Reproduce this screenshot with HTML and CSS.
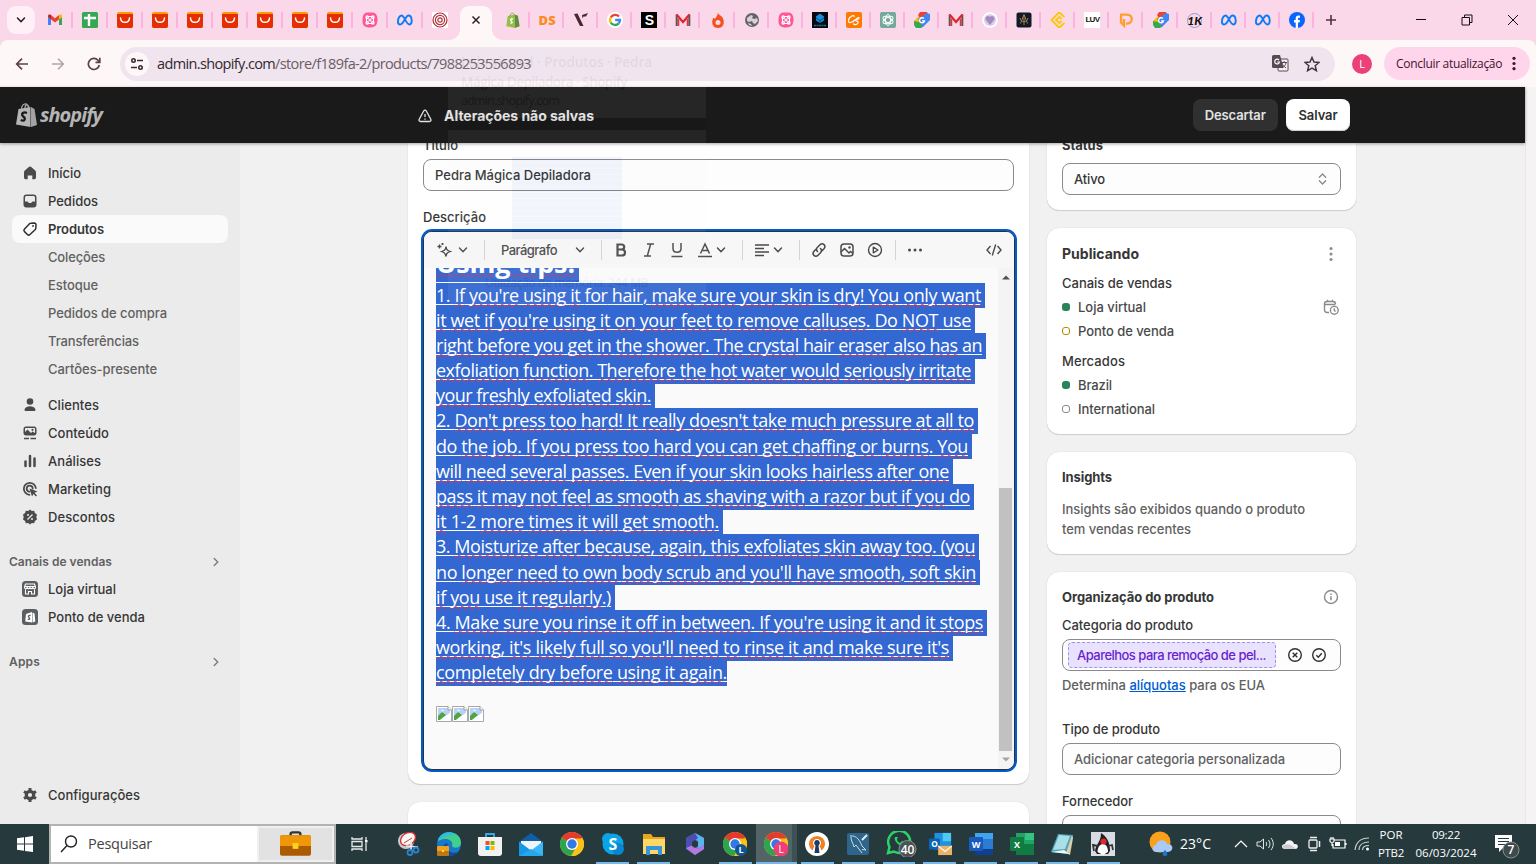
FILE: index.html
```html
<!DOCTYPE html>
<html lang="pt-BR">
<head>
<meta charset="utf-8">
<title>Pedra Mágica Depiladora · Shopify</title>
<link rel="stylesheet" href="styles.css">
</head>
<body>
<svg class="sprite" xmlns="http://www.w3.org/2000/svg">
  <symbol id="ali" viewBox="0 0 16 16"><rect width="16" height="16" rx="2" fill="#ff9a00"/><path d="M0 2h16v12a2 2 0 0 1-2 2H2a2 2 0 0 1-2-2z" fill="#e62e04"/><path d="M3.500 6c.3 5.800 8.700 5.800 9 0" fill="none" stroke="#fff" stroke-width="1.500" stroke-linecap="round"/></symbol>
  <symbol id="gmail" viewBox="0 0 16 16"><path d="M1 4v9h3V7z" fill="#4285f4"/><path d="M15 4v9h-3V7z" fill="#34a853"/><path d="M1 4.500V4c0-1.500 1.500-2 2.600-1.200L4 3v4.500z" fill="#c5221f"/><path d="M12 3l.4-.3C13.500 1.900 15 2.600 15 4v1.200l-3 2.300z" fill="#fbbc04"/><path d="M4 3l4 3.200L12 3v4.500l-4 3-4-3z" fill="#ea4335"/></symbol>
  <symbol id="gmail2" viewBox="0 0 16 16"><path d="M1.700 14V2.500M14.300 14V2.500" stroke="#5d5355" stroke-width="2"/><path d="M3.500 14V7M12.500 14V7" stroke="#e0353d" stroke-width="1.500"/><path d="M1.500 2.500L8 10l6.500-7.500" fill="none" stroke="#e0262e" stroke-width="2.200"/></symbol>
  <symbol id="sheet" viewBox="0 0 16 16"><rect width="16" height="16" rx="1.500" fill="#34a853"/><path d="M7 2v12M2 6h12" stroke="#fff" stroke-width="2.400"/></symbol>
  <symbol id="pinkatom" viewBox="0 0 16 16"><path d="M5 .5h6c3 .5 4.500 3 4.500 7 0 5-2 8-7.500 8S0 13 .5 8C.8 3 2 1 5 .5z" fill="#ff5595"/><g fill="none" stroke="#fff" stroke-width="1.100"><rect x="4.500" y="4.500" width="7" height="7" rx="2"/><circle cx="5.200" cy="5.200" r="1.300"/><circle cx="10.800" cy="5.200" r="1.300"/><circle cx="5.200" cy="10.800" r="1.300"/><circle cx="10.800" cy="10.800" r="1.300"/><circle cx="8" cy="8" r="1"/></g></symbol>
  <symbol id="meta" viewBox="0 0 16 16"><path d="M1 10.500C.7 6.500 2.500 3.500 4.600 3.500c3 0 4.300 9 7.900 9 3.300 0 2.800-9-1-9-3.300 0-4.600 9-8.300 9-1.300 0-2-.8-2.200-2z" fill="none" stroke="#0b7cf5" stroke-width="1.900"/></symbol>
  <symbol id="target" viewBox="0 0 16 16"><rect width="16" height="16" fill="#fff"/><g fill="none" stroke="#b2303c" stroke-width="1.200"><circle cx="8" cy="8" r="7"/><circle cx="8" cy="8" r="4.600"/><circle cx="8" cy="8" r="2.200"/></g></symbol>
  <symbol id="bag" viewBox="0 0 16 18"><path d="M2 4.500l8-1.700V18L.5 16z" fill="#95bf47"/><path d="M10 2.800l3.500 1.500L15.500 16 10 18z" fill="#5e8e3e"/><path d="M4.500 5C5 .5 9 0 9.500 4" fill="none" stroke="#7ba73c"/><path d="M8 8C6 7 4.500 8.500 6 10s1.500 3-1 2.500" fill="none" stroke="#fff" stroke-width="1.500"/></symbol>
  <symbol id="graybag" viewBox="0 0 21 24"><path d="M2.500 6l12-2v20L0 21.500z" fill="#b5b5b5"/><path d="M15 4l3.500 2L21 22l-6 2z" fill="#a2a2a2"/><path d="M5.500 6C6 0 11.500-1 12.500 5M9 5c0-4 3-4 4-1" fill="none" stroke="#aaa" stroke-width="1.200"/><path d="M11 10C7.500 8.500 5 10.500 6.700 13c3.800 2.500 2 6-2 4" fill="none" stroke="#1a1a1a" stroke-width="2.200"/></symbol>
  <symbol id="vee" viewBox="0 0 16 16"><path d="M1 2l3.500-.5 6 12.500H7zM9 3l6-2-2 3.500h-2.500l-1 2z" fill="#4a2631"/></symbol>
  <symbol id="google" viewBox="0 0 16 16"><circle cx="8" cy="8" r="8" fill="#fff"/><g fill="none" stroke-width="2.300"><path d="M12 4.600A5 5 0 0 0 3.700 5.500" stroke="#ea4335"/><path d="M3.700 5.500a5 5 0 0 0 0 5" stroke="#fbbc04"/><path d="M3.700 10.500A5 5 0 0 0 11.500 11.600" stroke="#34a853"/><path d="M11.500 11.600A5 5 0 0 0 13 8H8.200" stroke="#4285f4"/></g></symbol>
  <symbol id="gtag" viewBox="0 0 16 16"><path d="M6 0h7l2 5-6 3z" fill="#ea4335"/><path d="M0 9l6-6 3 6-6 4z" fill="#fbbc04"/><path d="M0 9l5 1 5 4-3 2H2L0 13z" fill="#34a853"/><path d="M4 7l9-6 3 1v6l-7 7z" fill="#4285f4"/><path d="M6 0h7l-7 6-2-3z" fill="#ea4335"/><path d="M9.900 6.500A2.500 2.500 0 1 0 10.500 9H8.200" fill="none" stroke="#fff" stroke-width="1.300"/></symbol>
  <symbol id="flame" viewBox="0 0 16 16"><path d="M8 0c0 3 3 3 4.500 5.500C15.500 11 13 16 8 16S.5 11 3.500 5.500L5 7C6 5 8 3.500 8 0z" fill="#f4511e"/><circle cx="8" cy="10.500" r="2.500" fill="#fbd8e9"/></symbol>
  <symbol id="globe" viewBox="0 0 16 16"><circle cx="8" cy="8" r="7" fill="#61646a"/><path d="M3 6l4-3 2 1-1 2 2 1 3-1 1 3-3 3-2-1-1-2-3 1-2-1zM4 11l3 1 1 2-3-1z" fill="#dccdd6"/></symbol>
  <symbol id="cube" viewBox="0 0 16 16"><rect width="16" height="16" fill="#05080c"/><path d="M8 1.500l4 3v4L8 11 4 8.500v-4z" fill="#1591dc"/><path d="M4 6l4 2.500L12 6M8 8v3" stroke="#064d84" fill="none"/><path d="M2 13.500h12" stroke="#1670a6" stroke-width="1.500" stroke-dasharray="2 .5"/></symbol>
  <symbol id="cs" viewBox="0 0 16 16"><rect width="16" height="16" rx="2" fill="#ff7a00"/><path d="M8 5C9 2 3 4 2.500 8.500 2 12 6.500 10.500 9 8c2-2 4.500-3.500 4-1.500C12 8 9 7 9.500 8.500c.8 1 3.500.5 2.500 2.500-1 1.800-4 2.300-4.500.5" fill="none" stroke="#fff" stroke-width="1.200"/></symbol>
  <symbol id="gpt" viewBox="0 0 16 16"><rect width="16" height="16" rx="2" fill="#75a99c"/><g fill="none" stroke="#fff"><ellipse cx="8" cy="8" rx="2.600" ry="5.500"/><ellipse cx="8" cy="8" rx="2.600" ry="5.500" transform="rotate(60 8 8)"/><ellipse cx="8" cy="8" rx="2.600" ry="5.500" transform="rotate(120 8 8)"/></g></symbol>
  <symbol id="heart" viewBox="0 0 16 16"><circle cx="8" cy="8" r="7.800" fill="#fff"/><circle cx="8" cy="8" r="6" fill="#dccdf0"/><path d="M8 13L3.500 7.500C3 4 6.500 3 8 5c1.500-2 5-1 4.500 2.500z" fill="#a58ac0"/></symbol>
  <symbol id="goldtile" viewBox="0 0 16 16"><rect x=".5" y=".5" width="15" height="15" rx="2" fill="#101a28"/><path d="M8 2.500l3.500 9M8 2.500l-3.500 9M8 3v10M4 6c1 5 7 5 8 0" fill="none" stroke="#a2834a"/></symbol>
  <symbol id="cc" viewBox="0 0 16 16"><path d="M14.500 5L10 1H8.500L1.500 8l7 7H10l4.500-4M11.500 7L9.500 4.800 6 8l3.500 3.200L11.500 9" fill="none" stroke="#fdc70c" stroke-width="1.900"/></symbol>
  <symbol id="pp" viewBox="0 0 16 16"><path d="M3 3v7.500l3 3V7M2 2.700h7c7 0 6 9.500-1 9" fill="none" stroke="#ff9d2e" stroke-width="2.300"/></symbol>
  <symbol id="fb" viewBox="0 0 16 16"><circle cx="8" cy="8" r="8" fill="#0866ff"/><path d="M6.700 16v-5.500H5V8h1.700V6.500C6.700 4 8.200 3.300 11 3.700v2.100C9.300 5.700 9 6 9 7v1h2l-.4 2.500H9V16z" fill="#fff"/></symbol>
  <symbol id="down" viewBox="0 0 10 10"><path d="M1.500 3L5 6.700 8.500 3" fill="none" stroke="currentColor" stroke-width="1.500" stroke-linecap="round"/></symbol>
  <symbol id="right" viewBox="0 0 10 10"><path d="M3.200 1.500L6.800 5 3.200 8.500" fill="none" stroke="currentColor" stroke-width="1.300" stroke-linecap="round"/></symbol>
  <symbol id="broken" viewBox="0 0 16 16"><path d="M.5.500H12L15.500 4v11.500H.5z" fill="#fff" stroke="#a8a8a8"/><path d="M2 2h9l3 3v3L2 13z" fill="#b9d2f4"/><path d="M2 10l4-4 4 3-6 5H2z" fill="#4fa443"/><path d="M5 5c0-1.500 3-1.500 3 0z" fill="#fff"/><path d="M3 15L15 6v9z" fill="#fff"/><path d="M12 .5V4h3.500" fill="#fff" stroke="#999"/></symbol>
  <symbol id="chrome" viewBox="0 0 24 24"><circle cx="12" cy="12" r="12" fill="#fbc116"/><path d="M12 12L1.600 6A12 12 0 0 1 22.400 6z" fill="#e33b2e"/><path d="M12 12L1.600 6A12 12 0 0 0 11 24l5.500-9.500z" fill="#2da44e"/><path d="M12 6.500h10.700A12 12 0 0 1 11.500 24l5.200-9z" fill="#fbc116"/><circle cx="12" cy="12" r="6" fill="#fff"/><circle cx="12" cy="12" r="4.700" fill="#3478e8"/></symbol>
</svg>

<div class="tabstrip">
  <div class="tab-search"><svg><use href="#down"/></svg></div>
  <div class="tabs tabs-left">
    <i><svg><use href="#gmail"/></svg></i><i><svg><use href="#sheet"/></svg></i><i><svg><use href="#ali"/></svg></i><i><svg><use href="#ali"/></svg></i><i><svg><use href="#ali"/></svg></i><i><svg><use href="#ali"/></svg></i><i><svg><use href="#ali"/></svg></i><i><svg><use href="#ali"/></svg></i><i><svg><use href="#ali"/></svg></i><i><svg><use href="#pinkatom"/></svg></i><i><svg><use href="#meta"/></svg></i><i><svg><use href="#target"/></svg></i>
  </div>
  <div class="tab-active"><svg viewBox="0 0 10 10"><path d="M1.500 1.500l7 7m0-7l-7 7" stroke="#2b2228" stroke-width="1.500"/></svg></div>
  <div class="tabs tabs-right">
    <i><svg><use href="#bag"/></svg></i><i><b class="ds">DS</b></i><i><svg><use href="#vee"/></svg></i><i><svg><use href="#google"/></svg></i><i><b class="sq">S</b></i><i><svg><use href="#gmail2"/></svg></i><i><svg><use href="#flame"/></svg></i><i><svg><use href="#globe"/></svg></i><i><svg><use href="#pinkatom"/></svg></i><i><svg><use href="#cube"/></svg></i><i><svg><use href="#cs"/></svg></i><i><svg><use href="#gpt"/></svg></i><i><svg><use href="#gtag"/></svg></i><i><svg><use href="#gmail2"/></svg></i><i><svg><use href="#heart"/></svg></i><i><svg><use href="#goldtile"/></svg></i><i><svg><use href="#cc"/></svg></i><i><b class="luv">LUV</b></i><i><svg><use href="#pp"/></svg></i><i><svg><use href="#gtag"/></svg></i><i><b class="onek">1K</b></i><i><svg><use href="#meta"/></svg></i><i><svg><use href="#meta"/></svg></i><i><svg><use href="#fb"/></svg></i>
  </div>
  <svg class="newtab" viewBox="0 0 12 12"><path d="M6 1v10M1 6h10" stroke="#51323f" stroke-width="1.600"/></svg>
  <div class="winctl">
    <svg viewBox="0 0 12 12"><path d="M1 5.500h10" stroke="#111"/></svg>
    <svg viewBox="0 0 12 12"><path d="M1 3.500h7.500V11H1zM3.500 3.500V1H11v7.500H8.500" fill="none" stroke="#111"/></svg>
    <svg viewBox="0 0 12 12"><path d="M1 1l10 10M11 1L1 11" stroke="#111"/></svg>
  </div>
</div>

<div class="toolbar">
  <svg class="nav" viewBox="0 0 14 14"><path d="M13 7H2M7 1.700L1.700 7 7 12.300" fill="none" stroke="#5c3f4c" stroke-width="1.700"/></svg>
  <svg class="nav" viewBox="0 0 14 14"><path d="M1 7h11M7 1.700L12.300 7 7 12.300" fill="none" stroke="#b2a5ab" stroke-width="1.600"/></svg>
  <svg class="nav" viewBox="0 0 14 14"><path d="M12.300 8A5.500 5.500 0 1 1 11 3.300L12.500 5M12.800 .8V5.300H8.500" fill="none" stroke="#5c3f4c" stroke-width="1.700"/></svg>
  <div class="omnibox">
    <span class="site"><svg viewBox="0 0 14 14"><g fill="none" stroke="#382c33" stroke-width="1.600"><circle cx="3.500" cy="3.500" r="1.700"/><path d="M7 3.500h6M1 10.500h6"/><circle cx="10.500" cy="10.500" r="1.700"/></g></svg></span>
    <span class="url" data-w="374"><em>admin.shopify.com</em>/store/f189fa-2/products/7988253556893</span>
    <svg class="translate" viewBox="0 0 17 17"><rect x="6" y="4" width="10" height="12" rx="1" fill="#f7eff4" stroke="#574a51"/><path d="M9 7.500h6M12 6v1.500M10 8c.5 2 2 3.500 4 5M14 8c-.5 2-2 4-4 5" stroke="#574a51" fill="none"/><path d="M1.500 0H8l3.500 13h-10A1.500 1.500 0 0 1 0 11.500v-10A1.500 1.500 0 0 1 1.500 0z" fill="#574a51"/><path d="M7 5A2.400 2.400 0 1 0 7.500 7H5.200" fill="none" stroke="#fff" stroke-width="1.200"/></svg>
    <svg class="star" viewBox="0 0 16 16"><path d="M8 1.500l2 4.600 5 .4-3.800 3.300 1.200 4.900L8 12.100l-4.400 2.600 1.200-4.900L1 6.500l5-.4z" fill="none" stroke="#453940" stroke-width="1.500"/></svg>
  </div>
  <span class="avatar">L</span>
  <div class="update"><span data-w="106">Concluir atualização</span><svg viewBox="0 0 4 16"><circle cx="2" cy="2.500" r="1.700"/><circle cx="2" cy="8" r="1.700"/><circle cx="2" cy="13.500" r="1.700"/></svg></div>
</div>

<div class="viewport">
<div class="app">
  <header class="topbar">
    <div class="logo"><svg><use href="#graybag"/></svg><span data-w="62">shopify</span></div>
    <div class="unsaved"><svg viewBox="0 0 14 14"><path d="M7 1.200c.6 0 1 .3 1.300.8l4.500 8.200c.6 1.200 0 2.300-1.300 2.300h-9C1.200 12.500.6 11.400 1.200 10.200L5.700 2c.3-.5.7-.8 1.300-.8z" fill="none" stroke="#e3e3e3" stroke-width="1.300"/><path d="M7 5v3M7 9.500v1.300" stroke="#e3e3e3" stroke-width="1.300"/></svg><span data-w="150">Alterações não salvas</span></div>
    <div class="actions"><button class="discard"><span data-w="61">Descartar</span></button><button class="save"><span data-w="39">Salvar</span></button></div>
  </header>
  <div class="body">
    <nav class="side">
      <a><svg viewBox="0 0 16 16"><path d="M8 1.500c.5 0 .9.200 1.200.5l4 3.600c.5.500.8 1 .8 1.700V12.500c0 1-.8 1.700-1.700 1.700h-2V10.500h-4.600v3.700h-2c-1 0-1.700-.7-1.700-1.700V7.300c0-.7.300-1.200.8-1.700l4-3.600c.3-.3.700-.5 1.200-.5z"/></svg><span data-w="33">Início</span></a>
      <a><svg viewBox="0 0 16 16"><path d="M4.500 1.500h7c2 0 3 1 3 3v7c0 2-1 3-3 3h-7c-2 0-3-1-3-3v-7c0-2 1-3 3-3zM3 5v3.500h2.500L7 10h2l1.500-1.500H13V5c0-1.500-.5-2-2-2H5C3.500 3 3 3.500 3 5z" fill-rule="evenodd"/></svg><span data-w="50">Pedidos</span></a>
      <a class="on"><svg viewBox="0 0 16 16"><path d="M8.700 2.200L12 2c1.300 0 2 .7 2 2l-.2 3.300c0 .5-.2.800-.5 1.200L8 13.500c-.8.800-1.800.8-2.600 0L2.500 10.600c-.8-.8-.8-1.800 0-2.600l5-5.300c.4-.3.700-.5 1.200-.5z" fill="none" stroke="#303030" stroke-width="1.500"/><circle cx="11" cy="5" r="1"/></svg><span data-w="56">Produtos</span></a>
      <a class="sub"><span data-w="57">Coleções</span></a><a class="sub"><span data-w="50">Estoque</span></a><a class="sub"><span data-w="119">Pedidos de compra</span></a><a class="sub"><span data-w="91">Transferências</span></a><a class="sub last"><span data-w="109">Cartões-presente</span></a>
      <a><svg viewBox="0 0 16 16"><circle cx="8" cy="4.500" r="3.300"/><path d="M2.500 12.500C4 8.200 12 8.200 13.500 12.500c.2.900-.4 1.500-1.200 1.500H3.700c-.8 0-1.400-.6-1.200-1.500z"/></svg><span data-w="51">Clientes</span></a>
      <a><svg viewBox="0 0 16 16"><path d="M4 1.500h8c1.600 0 2.500.9 2.500 2.500v4c0 1.600-.9 2.500-2.500 2.500H4C2.400 10.500 1.500 9.600 1.500 8V4c0-1.600.9-2.500 2.500-2.500zM3 7l2.500-2.500L9 8l1.500-1.500L13 8V4c0-.7-.3-1-1-1H4c-.7 0-1 .3-1 1z" fill-rule="evenodd"/><circle cx="10.500" cy="4.800" r="1.100"/><path d="M2 13.500h5M8.500 13.500H14" stroke="#4a4a4a" stroke-width="1.500"/></svg><span data-w="61">Conteúdo</span></a>
      <a><svg viewBox="0 0 16 16"><path d="M3.500 8.500V13M8 3v10M12.500 5.500V13" stroke="#4a4a4a" stroke-width="2.500" stroke-linecap="round"/></svg><span data-w="53">Análises</span></a>
      <a><svg viewBox="0 0 16 16"><g fill="none" stroke="#4a4a4a" stroke-width="1.800" stroke-linecap="round"><path d="M13.800 7A6 6 0 1 0 7.500 13.800"/><path d="M10.700 7.500A3 3 0 1 0 7.500 10.700"/></g><path d="M7.500 7.500l8 3-3 1.200L15 14.500 14 15.500l-2.500-2.500L10 15.500z"/></svg><span data-w="63">Marketing</span></a>
      <a><svg viewBox="0 0 16 16"><path d="M8 .5l1.800 1.600 2.400-.3.700 2.300L15 5.400 14.300 8l.7 2.600-2.100 1.300-.7 2.300-2.400-.3L8 15.500l-1.800-1.600-2.400.3-.7-2.300L1 10.600 1.700 8 1 5.400l2.100-1.300.7-2.300 2.400.3z"/><path d="M5.500 10.500l5-5" stroke="#ebebeb" stroke-width="1.300"/><circle cx="6" cy="6" r="1" fill="#ebebeb"/><circle cx="10" cy="10" r="1" fill="#ebebeb"/></svg><span data-w="67">Descontos</span></a>
      <div class="sect"><span data-w="103">Canais de vendas</span><svg><use href="#right"/></svg></div>
      <a><svg viewBox="0 0 16 16"><rect width="16" height="16" rx="3.500" fill="#5c5f62"/><path d="M3.500 3h9l1 3.200c0 2-2.300 2-2.700.3-.5 1.500-2.300 1.500-2.800 0-.5 1.500-2.300 1.500-2.800 0C4.800 8.200 2.500 8.200 2.500 6.200zM3.500 8.500V13h3v-2.500h3V13h3V8.500M2.700 5.500h10.600" fill="none" stroke="#fff" stroke-width="1.100"/></svg><span data-w="68">Loja virtual</span></a>
      <a><svg viewBox="0 0 16 16"><rect width="16" height="16" rx="3.500" fill="#5c5f62"/><path d="M4 5l6-2v10.500l-6.800-1zM10.500 3.500l2 1 .8 8-2.800 1z" fill="#fff"/><path d="M8.600 6.500C6.500 6 5.800 7.500 7 8.500s1 2.500-1.200 1.700" fill="none" stroke="#5c5f62" stroke-width="1.300"/></svg><span data-w="97">Ponto de venda</span></a>
      <div class="sect apps"><span data-w="31">Apps</span><svg><use href="#right"/></svg></div>
      <a class="config"><svg viewBox="0 0 16 16"><circle cx="8" cy="8" r="3.700" fill="none" stroke="#4a4a4a" stroke-width="3.200"/><path d="M8 1v3M8 12v3M2 4.500L4.500 6M14 4.500L11.500 6M2 11.500L4.500 10M14 11.500L11.500 10" stroke="#4a4a4a" stroke-width="3"/></svg><span data-w="92">Configurações</span></a>
    </nav>

    <main class="content">
      <section class="colmain">
        <div class="card product">
          <label><span data-w="35">Título</span></label>
          <div class="field"><span data-w="156">Pedra Mágica Depiladora</span></div>
          <label class="desc"><span data-w="63">Descrição</span></label>
          <div class="editor">
            <div class="tools">
              <svg class="i16" viewBox="0 0 16 16"><path d="M10 4.500C10.500 8 11.500 8.500 14.500 9.500 11.500 10.500 10.500 11 10 14.500 9 11 8.500 10.500 5.500 9.500 8.500 8.500 9.500 8 10 4.500zM3.500 2.500v4M1.500 4.500h4M6.500 1v2M5.500 2h2" fill="none" stroke="#4a4a4a" stroke-width="1.300"/></svg>
              <svg class="chev"><use href="#down"/></svg><s></s>
              <span class="para" data-w="56">Parágrafo</span><svg class="chev p"><use href="#down"/></svg><s></s>
              <svg class="i16 t1" viewBox="0 0 16 16"><path d="M4.500 2.500h4c3.600 0 3.600 5 0 5h-4zM4.500 7.500H9c4 0 4 6 0 6H4.500z" fill="none" stroke="#4a4a4a" stroke-width="2.200"/></svg>
              <svg class="i16 t2" viewBox="0 0 16 16"><path d="M6 2h7M3 14h7M9.700 2L6.300 14" stroke="#4a4a4a" stroke-width="1.500"/></svg>
              <svg class="i16 t2" viewBox="0 0 16 16"><path d="M4 1v5.500c0 5 8 5 8 0V1M2.500 14.500h11" fill="none" stroke="#4a4a4a" stroke-width="1.500"/></svg>
              <svg class="i16 t2" viewBox="0 0 16 16"><path d="M3.500 11.500L8 2l4.500 9.500M5 8.500h6M1 14.500h14" fill="none" stroke="#4a4a4a" stroke-width="1.500"/></svg>
              <svg class="chev n"><use href="#down"/></svg><s></s>
              <svg class="i16 t3" viewBox="0 0 16 16"><path d="M1 3h14M1 6.500h9M1 10h14M1 13.500h9" stroke="#4a4a4a" stroke-width="1.500"/></svg>
              <svg class="chev n"><use href="#down"/></svg><s></s>
              <svg class="i16 t1" viewBox="0 0 16 16"><g fill="none" stroke="#4a4a4a" stroke-width="1.500" stroke-linecap="round"><path d="M6.500 9.500c-1.500-1.500-1.200-3 0-4.300L9 2.700c3-2.500 6.500 1 4 4L11 8.800"/><path d="M9.500 6.500c1.500 1.500 1.200 3 0 4.300L7 13.300c-3 2.500-6.500-1-4-4L5 7.200"/></g></svg>
              <svg class="i16 t2" viewBox="0 0 16 16"><rect x="2" y="2" width="12" height="12" rx="3" fill="none" stroke="#4a4a4a" stroke-width="1.500"/><path d="M2 10l3.500-3.500L10 11l1.500-1.500L14 11.500" fill="none" stroke="#4a4a4a" stroke-width="1.500"/><circle cx="10.500" cy="5.500" r="1.200" fill="#4a4a4a"/></svg>
              <svg class="i16 t2" viewBox="0 0 16 16"><circle cx="8" cy="8" r="6.500" fill="none" stroke="#4a4a4a" stroke-width="1.400"/><path d="M6.300 5.200v5.600L11 8z" fill="none" stroke="#4a4a4a" stroke-width="1.400" stroke-linejoin="round"/></svg><s></s>
              <svg class="i16 t1" viewBox="0 0 16 16"><g fill="#4a4a4a"><circle cx="2.500" cy="8" r="1.500"/><circle cx="8" cy="8" r="1.500"/><circle cx="13.500" cy="8" r="1.500"/></g></svg>
              <svg class="i16 code" viewBox="0 0 16 16"><path d="M4.500 4L1 8l3.500 4M11.500 4L15 8l-3.500 4M9.700 2.500l-3.400 11" fill="none" stroke="#4a4a4a" stroke-width="1.400"/></svg>
            </div>
            <div class="pane">
              <div class="doc">
                <h1><span data-w="139">Using tips:</span></h1>
                <div id="lines"></div>
                <p class="imgs"><svg><use href="#broken"/></svg><svg><use href="#broken"/></svg><svg><use href="#broken"/></svg></p>
              </div>
              <div class="scroll"><svg viewBox="0 0 8 5"><path d="M0 4.500L4 .5l4 4z" fill="#505050"/></svg><i></i><svg viewBox="0 0 8 5"><path d="M0 .5l4 4 4-4z" fill="#a3a3a3"/></svg></div>
            </div>
          </div>
        </div>
        <div class="card media"></div>
      </section>

      <aside class="colside">
        <div class="card status">
          <h3><span data-w="41">Status</span></h3>
          <div class="field"><span data-w="31">Ativo</span><svg viewBox="0 0 10 14"><path d="M1.500 5L5 1.500 8.500 5M1.500 9L5 12.500 8.500 9" fill="none" stroke="#8a8a8a" stroke-width="1.500" stroke-linecap="round"/></svg></div>
        </div>
        <div class="card pub">
          <div class="row"><h3 class="big"><span data-w="77">Publicando</span></h3><svg class="i16" viewBox="0 0 16 16"><g fill="#8a8a8a"><circle cx="8" cy="2.500" r="1.500"/><circle cx="8" cy="8" r="1.500"/><circle cx="8" cy="13.500" r="1.500"/></g></svg></div>
          <h4><span data-w="110">Canais de vendas</span></h4>
          <div class="row it"><i class="dot green"></i><span data-w="68">Loja virtual</span><svg class="i16" viewBox="0 0 16 16"><g fill="none" stroke="#8a8a8a" stroke-width="1.400"><path d="M6 13.500H4c-1.500 0-2.500-1-2.500-2.500V5c0-1.500 1-2.500 2.500-2.500h6c1.500 0 2.500 1 2.500 2.500M1.500 5.500h11M4.500 .7v2M9.500 .7v2"/><circle cx="11.300" cy="11.300" r="3.900"/><path d="M11.300 9.300v2.200l1.300 1"/></g></svg></div>
          <div class="row it"><i class="dot amber"></i><span data-w="96">Ponto de venda</span></div>
          <h4 class="mk"><span data-w="63">Mercados</span></h4>
          <div class="row it"><i class="dot green"></i><span data-w="34">Brazil</span></div>
          <div class="row it"><i class="dot grey"></i><span data-w="77">International</span></div>
        </div>
        <div class="card ins">
          <h3><span data-w="50">Insights</span></h3>
          <p><span data-w="243">Insights são exibidos quando o produto</span><br><span data-w="129">tem vendas recentes</span></p>
        </div>
        <div class="card org">
          <div class="row"><h3><span data-w="152">Organização do produto</span></h3><svg class="i16" viewBox="0 0 16 16"><circle cx="8" cy="8" r="6.500" fill="none" stroke="#8a8a8a" stroke-width="1.400"/><path d="M8 7.200v4M8 4.500V6" stroke="#8a8a8a" stroke-width="1.500"/></svg></div>
          <label><span data-w="131">Categoria do produto</span></label>
          <div class="field cat"><em><span data-w="189">Aparelhos para remoção de pel...</span></em>
            <svg class="i16" viewBox="0 0 16 16"><g fill="none" stroke="#303030" stroke-width="1.400"><circle cx="8" cy="8" r="6.300"/><path d="M5.700 5.700l4.600 4.600M10.300 5.700l-4.600 4.600"/></g></svg>
            <svg class="i16" viewBox="0 0 16 16"><g fill="none" stroke="#303030" stroke-width="1.400"><circle cx="8" cy="8" r="6.300"/><path d="M5.300 8.200l2 2 3.500-4"/></g></svg></div>
          <p class="hint"><span data-w="203">Determina <a>alíquotas</a> para os EUA</span></p>
          <label class="type"><span data-w="98">Tipo de produto</span></label>
          <div class="field ph"><span data-w="211">Adicionar categoria personalizada</span></div>
          <label class="forn"><span data-w="71">Fornecedor</span></label>
          <div class="field"></div>
        </div>
      </aside>
    </main>
  </div>
</div>
<div class="pagebar"></div>
</div>

<div class="taskbar">
  <div class="start"><svg viewBox="0 0 16 16"><path d="M0 2.300L7 1.300V7.500H0zM8 1.200L16 0v7.500H8zM0 8.500h7v6.200L0 13.700zM8 8.500h8V16L8 14.900z" fill="#fff"/></svg></div>
  <div class="search"><svg viewBox="0 0 18 18"><circle cx="11" cy="6.500" r="5.500" fill="none" stroke="#222" stroke-width="1.400"/><path d="M7 10.500L1 17" stroke="#222" stroke-width="1.400"/></svg><span data-w="64">Pesquisar</span>
    <div class="case"><svg viewBox="0 0 32 26"><path d="M11 5V2.500C11 1.500 12 1 13 1h6c1 0 2 .5 2 1.500V5" fill="none" stroke="#333" stroke-width="2.500"/><rect y="4" width="32" height="21" rx="2" fill="#ab5c02"/><path d="M2 4h28a2 2 0 0 1 2 2v9H0V6c0-1 1-2 2-2z" fill="#f09609"/><rect x="13" y="12" width="6" height="6" fill="#ffd21e"/></svg></div>
  </div>
  <div class="tview"><svg viewBox="0 0 18 18"><path d="M1 2v2h10V2M1 16v-2h10v2M1 6.500h10v5H1zM15 2v3M15 8v8" fill="none" stroke="#e6eaea" stroke-width="1.300"/><rect x="14" y="5" width="2.500" height="2.500" fill="#fff"/></svg></div>
  <div class="apps-row">
    <i><svg viewBox="0 0 24 24"><ellipse cx="10" cy="9" rx="8" ry="8" fill="#c9cccf"/><ellipse cx="12" cy="7" rx="8" ry="6" transform="rotate(-35 12 7)" fill="#f7f7f7" stroke="#d6302a" stroke-width="1.300"/><path d="M8 11l8-5" stroke="#d6302a"/><path d="M10 14l12 1M15 9l0 10" stroke="#e4e9ec" stroke-width="1.700"/><circle cx="14" cy="20.500" r="2.500" fill="none" stroke="#2785d0" stroke-width="1.800"/><circle cx="20" cy="18" r="2.500" fill="none" stroke="#2785d0" stroke-width="1.800"/></svg></i>
    <i><svg viewBox="0 0 24 24"><circle cx="12" cy="12" r="12" fill="#1879c9"/><path d="M1 9C3-3 24-3 24 11c0 5-7 6-9 3 2-5-5-10-14-5z" fill="#41cf8c"/><path d="M1 9C3 0 14-2 19 3 11 3 5 5 1 9z" fill="#31bde0"/><path d="M11 11c-3 6 3 12 10 9-4 6-15 5-16-2 0-4 3-7 6-7z" fill="#104b99"/><rect y="15" width="12" height="9" rx="1" fill="#c07814"/><rect y="14" width="12" height="5" rx="1" fill="#f3a01a"/><rect x="5" y="18" width="2" height="2" fill="#ffe35c"/></svg></i>
    <i><svg viewBox="0 0 24 24"><path d="M8 6V2h8v4" fill="none" stroke="#3ba7e5" stroke-width="1.800"/><path d="M0 5h24v16c0 2-1 3-3 3H3c-2 0-3-1-3-3z" fill="#f1f1f1"/><path d="M7.500 9h4v4h-4z" fill="#f25022"/><path d="M12.500 9h4v4h-4z" fill="#7fba00"/><path d="M7.500 14h4v4h-4z" fill="#00a4ef"/><path d="M12.500 14h4v4h-4z" fill="#ffb900"/></svg></i>
    <i><svg viewBox="0 0 24 24"><path d="M0 10L12 1l12 9v13H0z" fill="#0e5ea8"/><path d="M2 9h20v5l-10 6L2 14z" fill="#eef6fb"/><path d="M0 9.500l12 9-12 5.500z" fill="#1598e5"/><path d="M24 9.500l-12 9 12 5.500z" fill="#38b9f5"/><path d="M0 24l12-7 12 7z" fill="#27a7ec"/></svg></i>
    <i><svg><use href="#chrome"/></svg></i>
    <i class="run"><svg viewBox="0 0 24 24"><circle cx="12" cy="12" r="10.500" fill="#0aa5e8"/><circle cx="7" cy="7" r="6" fill="#0aa5e8"/><circle cx="17" cy="17" r="6" fill="#0787d1"/><text x="12" y="18" class="ico-t">S</text></svg></i>
    <i class="run"><svg viewBox="0 0 24 24"><path d="M1 2h8l2 3h12v16H1z" fill="#e9a71d"/><path d="M1 7h22v15H1z" fill="#ffd766"/><path d="M4 23v-9h16v9h-4v-5H8v5z" fill="#3596dc"/></svg></i>
    <i><svg viewBox="0 0 24 24"><path d="M12 1l9 5v11l-9 6-9-6V6z" fill="#6767d5"/><path d="M12 1l9 5v7l-6 4V9L9 5z" fill="#59b4eb"/><path d="M3 6l9-5 3 5-5 4v8l-7-2z" fill="#4a4fb0"/><path d="M3 16l7-3 5 4 6-4v4l-9 6z" fill="#b778dd"/><path d="M9 10l3-2 3 2v4l-3 2-3-2z" fill="#263a3e"/></svg></i>
    <i class="run"><svg viewBox="0 0 24 24"><use href="#chrome"/><circle cx="18" cy="18" r="6" fill="#105494"/><text x="18" y="21" class="ico-s">L</text></svg></i>
    <i class="run cur"><svg viewBox="0 0 24 24"><use href="#chrome"/><circle cx="17" cy="17" r="7.500" fill="#ec407a"/><text x="17" y="20.500" class="ico-m">L</text></svg></i>
    <i class="run"><svg viewBox="0 0 24 24"><circle cx="12" cy="12" r="12" fill="#fff"/><path d="M7.500 18.500A8 8 0 1 1 16.500 18.500L14.500 14A4 4 0 1 0 9.500 14z" fill="#ee8124"/><path d="M12 8a3 3 0 0 1 1.500 5.500l1 7.500h-5l1-7.500A3 3 0 0 1 12 8z" fill="#1c3b66"/></svg></i>
    <i class="run"><svg viewBox="0 0 24 24"><rect x="1" y="1" width="22" height="22" rx="2" fill="#2f658a"/><path d="M4 4c7-1 10 5 12 10l4 4-4-.5M5 5c0 5 2 5 3 10l2-2 6 8" fill="none" stroke="#c5dae8"/><path d="M16 8l5-5" stroke="#e6edf1" stroke-width="2"/></svg></i>
    <i class="run"><svg class="over" viewBox="0 0 32 26"><path d="M3 22l1.500-6A11 11 0 1 1 9 20.500z" fill="#263a3e" stroke="#2bd366" stroke-width="2.500"/><path d="M10 6c-2 3 4 10 9 9l2-3-4-2-2 2c-2-1-3-2-3-4l1-2z" fill="#2bd366"/><circle cx="22.500" cy="18" r="8.500" fill="#4b5355" stroke="#8a9091"/><text x="22.500" y="22.500" class="ico-n">40</text></svg></i>
    <i class="run"><svg viewBox="0 0 26 24"><rect x="7" width="18" height="18" fill="#1e91df"/><path d="M16 0h9v9h-9z" fill="#50c8f4"/><rect x="1" y="6" width="12" height="12" rx="1" fill="#0a64b5"/><text x="7" y="15.500" class="ico-s">O</text><path d="M11 14h15v10H11z" fill="#edb264"/><path d="M11 14l7.500 6 7.500-6" fill="none" stroke="#fff" stroke-width="1.300"/></svg></i>
    <i class="run"><svg viewBox="0 0 24 24"><path d="M6 1h18v22H6z" fill="#2b7cd3"/><path d="M6 1h18v6H6z" fill="#41a5ee"/><path d="M6 17h18v6H6z" fill="#103f91"/><rect y="5" width="14" height="14" rx="1" fill="#185abd"/><text x="7" y="15.500" class="ico-s">W</text></svg></i>
    <i class="run"><svg viewBox="0 0 24 24"><path d="M6 1h18v22H6z" fill="#21a366"/><path d="M15 1h9v7h-9z" fill="#33c481"/><path d="M6 12h18v11H6z" fill="#107c41"/><rect y="5" width="14" height="14" rx="1" fill="#107c41"/><text x="7" y="15.500" class="ico-s">X</text></svg></i>
    <i class="run"><svg viewBox="0 0 24 24"><path d="M8 2l15 1-5 19-17-2z" fill="#4fa3b8"/><path d="M9 3l11 1-5 13-12 1z" fill="#a9e0e8"/><path d="M22 3l1 3-3 17-4-2z" fill="#d9cfaa"/><path d="M1 20l13-2 5 4z" fill="#edf6f7"/></svg></i>
    <i class="run"><svg viewBox="0 0 24 24"><rect width="24" height="24" fill="#d9dce3"/><path d="M10 1c5 3 9 8 9 18l-2 3H6l-2-3C5 12 10 10 10 1z" fill="#202026"/><path d="M6.500 20c0-4 2-8 5.500-8s5 4 5 8l-5 3z" fill="#fff"/><circle cx="12.500" cy="9.500" r="3" fill="#e5252a"/><path d="M7 14l-5-1 1 6M17 14l4-1 1 5" fill="none" stroke="#333" stroke-width="1.800"/></svg></i>
  </div>
  <div class="weather"><svg viewBox="0 0 24 26"><circle cx="11" cy="11" r="10.500" fill="#f9a11b"/><path d="M7 21c-5 0-4-7 0-7 1-6 10-6 11-1 7-1 7 8 1 8z" fill="#a9c9f6"/><path d="M16 19c3 3 3 6 0 6s-3-3 0-6z" fill="#1d76d2"/></svg><span data-w="31">23°C</span></div>
  <div class="tray">
    <svg viewBox="0 0 18 16"><path d="M3 11l6-6 6 6" fill="none" stroke="#fff" stroke-width="1.200"/></svg>
    <svg viewBox="0 0 18 16"><path d="M1 6h3l3.500-3v10L4 10H1zM10 6c1 1.500 1 2.500 0 4M12.500 4c2 3 2 5 0 8M15 2c3 4 3 8 0 12" fill="none" stroke="#dfe4e4"/></svg>
    <svg viewBox="0 0 18 16"><path d="M4 13C0 13 0 8 4 8c1-5 8-5 9 0 5-1 5 5 1 5z" fill="#f3f3f3"/><path d="M3 9c4-2 8 0 12 4H5c-3 0-4-3-2-4z" fill="#c9cdce"/></svg>
    <svg viewBox="0 0 18 16"><rect x="4" y="4" width="8" height="8" rx="1" fill="none" stroke="#eee" stroke-width="1.300"/><path d="M14.500 5v6M5 1.500h7M5 14.500h7" fill="none" stroke="#eee" stroke-width="1.500"/></svg>
    <svg viewBox="0 0 18 16"><path d="M5 4h11v8H4V8M17 7v2M1 3h4v2c0 2-4 2-4 0zM2 1v2M4 1v2M3 7v3" fill="none" stroke="#fff" stroke-width="1.200"/><path d="M6 6h5v4H6z" fill="#fff"/></svg>
    <svg viewBox="0 0 18 16"><path d="M2 14C3 6 8 2 16 2M6 14c0-5 4-8 10-8M9.500 14c0-3 3-4.500 6.500-4.500" fill="none" stroke="#c9cfcf" stroke-width="1.200"/><circle cx="14.500" cy="13" r="1.500" fill="#fff"/></svg>
  </div>
  <div class="lang"><span data-w="23">POR</span><span data-w="26">PTB2</span></div>
  <div class="clock"><span data-w="28">09:22</span><span data-w="61">06/03/2024</span></div>
  <div class="notif"><svg viewBox="0 0 28 26"><path d="M1 1h17v13H9l-4 4v-4H1z" fill="#fff"/><path d="M4 4.500h11M4 7.500h11M4 10.500h8" stroke="#263a3e" stroke-width="1.200"/><circle cx="17" cy="16" r="8" fill="#3f4a4d" stroke="#869092"/><text x="17" y="20" class="ico-n">7</text></svg></div>
</div>

<div class="tabcard">
  <p data-w="191">Loja virtual · Produtos · Pedra</p><p data-w="166">Mágica Depiladora · Shopify</p><p class="host" data-w="98">admin.shopify.com</p>
  <div class="thumb"><b></b><i></i></div>
  <p class="mem" data-w="163">Utilização de memória: 244 MB</p>
</div>
<script src="script.js"></script>
</body>
</html>
```

FILE: styles.css
```css
* { box-sizing: border-box; }
body { margin: 0; width: 1536px; height: 864px; overflow: hidden; display: flex; flex-direction: column; font-family: Inter, "Liberation Sans", sans-serif; font-size: 13px; line-height: 20px; color: #363636; position: relative; background: #fbd8e9; }
.sprite { position: absolute; width: 0; height: 0; }
svg { display: block; flex: none; }
h1, h3, h4, p { margin: 0; }
i, em { font-style: normal; }
[data-w] { display: inline-block; white-space: pre; }

/* browser tabs */
.tabstrip { height: 40px; flex: none; display: flex; align-items: center; background: #fbd8e9; padding-left: 6.5px; }
.tab-search { width: 28px; height: 28px; border-radius: 9px; background: #fff0f7; display: flex; align-items: center; justify-content: center; margin-right: 3px; color: #221a1f; }
.tab-search svg { width: 10px; height: 10px; }
.tabs { display: flex; }
.tabs > i { height: 16px; display: flex; align-items: center; justify-content: center; border-right: 2px solid #fbb2de; padding-left: 2px; }
.tabs svg { width: 16px; height: 16px; }
.tabs-left > i { width: 35px; }
.tabs-left > i:last-child { border-color: transparent; }
.tabs-right > i { width: 34.09px; }
.tab-active { width: 32px; height: 34px; margin: 6px 4px 0 2.5px; background: #fef7f8; border-radius: 9px 9px 0 0; display: flex; align-items: center; justify-content: center; padding-bottom: 6px; position: relative; }
.tab-active::before, .tab-active::after { content: ""; position: absolute; bottom: 0; width: 10px; height: 10px; }
.tab-active::before { right: 100%; background: radial-gradient(circle at 0 0, transparent 9.500px, #fef7f8 10px); }
.tab-active::after { left: 100%; background: radial-gradient(circle at 100% 0, transparent 9.500px, #fef7f8 10px); }
.tab-active svg { width: 10px; height: 10px; }
.ds { color: #ff8b1f; font: 800 13px "Open Sans", sans-serif; }
.sq { width: 16px; height: 16px; background: #000; color: #fff; font: 700 14px/16px "Liberation Sans", sans-serif; text-align: center; }
.luv { width: 16px; height: 16px; background: #fff; color: #151515; font: 700 8px/15px "Liberation Sans", sans-serif; text-align: center; letter-spacing: -.7px; }
.onek { width: 15px; height: 15px; border: 1px solid #8f9ec9; border-radius: 50%; font: italic 900 12px/13px Lato, sans-serif; color: #111; display: flex; justify-content: center; }
.newtab { width: 12px; height: 12px; margin-left: 11px; }
.winctl { margin-left: auto; display: flex; gap: 34px; padding-right: 17px; }
.winctl svg { width: 12px; height: 12px; }

/* address row */
.toolbar { height: 47px; flex: none; display: flex; align-items: center; background: #fef7f8; border-radius: 8px 8px 0 0; padding: 0 6px 0 15px; font-family: "Open Sans", sans-serif; }
.nav { width: 14px; height: 14px; margin-right: 22px; }
.omnibox { width: 1216px; height: 34px; border-radius: 17px; background: #f0e4ee; margin-left: -3px; display: flex; align-items: center; padding-left: 5px; }
.site { width: 24px; height: 24px; border-radius: 50%; background: #fef7f8; display: flex; align-items: center; justify-content: center; margin-right: 8px; }
.site svg { width: 14px; height: 14px; }
.url { font-size: 14.5px; color: #6b5d66; }
.url em { color: #33292f; }
.translate { width: 17px; height: 17px; margin-left: 741px; }
.star { width: 16px; height: 16px; margin-left: 15px; }
.avatar { width: 20px; height: 20px; border-radius: 50%; background: #ec407a; color: #fff; font: 11px/20px "Open Sans", sans-serif; text-align: center; margin-left: 17px; }
.update { height: 33px; width: 146px; border-radius: 17px; background: #ffd5eb; color: #44132f; margin-left: 12px; display: flex; align-items: center; font-size: 12px; padding-left: 12px; }
.update svg { width: 4px; height: 15px; margin-left: 10px; fill: #44132f; }

/* admin shell */
.viewport { height: 737px; flex: none; display: flex; }
.app { width: 1525px; display: flex; flex-direction: column; background: #f1f1f1; }
.pagebar { flex: 1; background: #f5f3f4; border-left: 1px solid #e7e7e7; }
.topbar { height: 56px; flex: none; background: #1a1a1a; display: flex; align-items: center; color: #e3e3e3; box-shadow: 0 1px 3px rgba(0,0,0,.35); position: relative; }
.logo { display: flex; align-items: center; width: 418px; padding-left: 16px; gap: 3px; font: italic 700 20px/24px "Open Sans", sans-serif; color: #b5b5b5; }
.logo svg { width: 21px; height: 24px; }
.unsaved { display: flex; align-items: center; gap: 12px; width: 774.5px; font-size: 14px; font-weight: 700; padding-top: 2px; }
.unsaved svg { width: 14px; height: 14px; }
.actions { display: flex; gap: 8px; }
button { border: 0; border-radius: 8px; height: 32px; font: 600 13px/20px Inter, sans-serif; padding: 0; text-align: center; }
.discard { width: 85.5px; background: #303030; color: #e3e3e3; }
.save { width: 64px; background: #fff; color: #303030; box-shadow: inset 0 -1px 1px #ccc; }
.body { flex: 1; display: flex; min-height: 0; }

.side { width: 240px; background: #ebebeb; padding: 16px 12px 0; display: flex; flex-direction: column; }
.side a { height: 28px; flex: none; display: flex; align-items: center; gap: 10px; padding-left: 10px; border-radius: 8px; font-weight: 500; }
.side a svg { width: 16px; height: 16px; fill: #4a4a4a; }
.side .on { background: #fafafa; font-weight: 600; }
.side .sub { padding-left: 36px; color: #616161; font-weight: 450; }
.side .last { margin-bottom: 8px; }
.sect { display: flex; justify-content: space-between; align-items: center; height: 28px; margin: 16px 7px 0 -3px; padding-top: 1px; color: #616161; font-size: 12px; font-weight: 600; }
.sect svg { width: 10px; height: 10px; color: #777; }
.side .config { margin-top: auto; margin-bottom: 15px; }

.content { flex: 1; overflow: hidden; display: flex; gap: 18.5px; padding-left: 168px; }
.card { background: #fff; border-radius: 12px; box-shadow: 0 1px 1px rgba(0,0,0,.14), 0 0 1px rgba(0,0,0,.2); }
.colmain { width: 620.5px; }
.colside { width: 309px; font-weight: 450; }
.product { margin-top: -24px; padding: 16px 15px 15px; height: 665px; }
.media { margin-top: 18px; height: 60px; }
label { display: block; height: 20px; margin-bottom: 4px; font-weight: 450; }
.field { height: 32px; border: 1px solid #8a8a8a; border-radius: 8px; background: #fdfdfd; display: flex; align-items: center; padding-left: 11px; font-weight: 450; }
.desc { margin-top: 16px; }
.editor { height: 539px; margin-right: -1px; border: 1px solid #303030; border-radius: 9px; box-shadow: 0 0 0 2px #005bd3; overflow: hidden; display: flex; flex-direction: column; background: #fafafa; }
.tools { height: 36px; flex: none; background: #f7f7f7; display: flex; align-items: center; padding-left: 12px; color: #4a4a4a; }
.tools s { width: 1px; height: 20px; background: #d4d4d4; }
.i16 { width: 16px; height: 16px; }
.chev { width: 10px; height: 10px; margin: 0 16px 0 6px; }
.chev.p { margin: 0 16px 0 18px; }
.chev.n { margin: 0 16px 0 3px; }
.para { margin-left: 16px; font-weight: 500; }
.t1, .t3 { margin-left: 11px; }
.t2 { margin-left: 12px; }
.tools .t2 + s { margin-left: 12px; }
.code { margin-left: auto; margin-right: 12px; }
.pane { flex: 1; min-height: 0; display: flex; }
.doc { flex: 1; overflow: hidden; padding-left: 12px; font-family: "Open Sans", sans-serif; color: #fff; }
.doc h1 { margin-top: -24px; height: 38.5px; font-size: 27px; line-height: 38px; }
.doc h1 span { background: #3367d1; padding-right: 4px; box-sizing: content-box; text-decoration: underline wavy #d9304f 1px; text-underline-offset: 0; }
.line { height: 25.2px; line-height: 24px; font-size: 18px; }
.line > span { display: inline-block; height: 25.7px; background: #3367d1; padding-right: 4px; white-space: pre; text-decoration: underline 1.300px; text-underline-offset: 2px; vertical-align: top; }
.line:last-child > span { padding-right: 0; }
.line u { position: relative; text-decoration: underline wavy #e8304c 1px; text-underline-offset: 1px; text-decoration-skip-ink: none; }
.imgs { display: flex; padding-top: 20.5px; }
.imgs svg { width: 16px; height: 16px; }
.scroll { width: 16px; background: #f4f4f4; display: flex; flex-direction: column; align-items: center; padding: 7px 0; }
.scroll svg { width: 8px; height: 5px; }
.scroll i { width: 13px; height: 263px; background: #c1c1c1; margin: auto 0 6px; }

.colside .card { padding: 16px 15px; margin-bottom: 18px; }
.colside h3, .colside h4 { font-size: 13px; font-weight: 650; line-height: 20px; }
.colside h4 { font-weight: 550; }
.colside h3.big { font-size: 14px; }
.colside .status { height: 91px; margin-top: -24px; }
.status h3 { margin-bottom: 8px; }
.status .field { justify-content: space-between; padding-right: 13px; }
.status .field svg { width: 9px; height: 14px; }
.row { display: flex; justify-content: space-between; align-items: center; height: 20px; }
.row > .i16 { margin-right: 2px; }
.pub { height: 206px; }
.pub h4 { margin-top: 9px; height: 22px; }
.it { justify-content: flex-start; height: 24px; gap: 8px; color: #4a4a4a; }
.it .i16 { margin-left: auto; }
.pub h4.mk { margin-top: 8px; }
.dot { width: 8px; height: 8px; border-radius: 3px; }
.green { background: #29845a; }
.amber { border: 1px solid #b98900; }
.grey { border: 1px solid #8a8a8a; }
.colside .pub { padding-top: 16px; }
.ins { height: 102px; }
.ins h3 { margin-bottom: 12px; }
.colside .ins { padding-top: 15px; }
.ins p, .hint { color: #616161; }
.org { height: 400px; }
.colside .org { padding-top: 15px; }
.org label { margin-top: 8px; }
.cat { padding-left: 5px; }
.cat em { width: 208px; height: 26px; border: 1px dashed #a78bfa; border-radius: 4px; background: #e9e2ff; color: #6a1fd0; padding-left: 8px; line-height: 24px; margin-right: 11px; }
.cat em + svg { margin-right: 8px; }
.hint { margin-top: 4px; }
.hint a { color: #005bd3; text-decoration: underline; }
.org .type { margin-top: 24px; }
.ph { color: #616161; }
.org .forn { margin-top: 16px; }

/* taskbar */
.taskbar { height: 40px; flex: none; background: #263a3e; display: flex; color: #fff; font-family: "Open Sans", sans-serif; }
.start { width: 49px; display: flex; align-items: center; justify-content: center; }
.start svg { width: 16px; height: 16px; }
.search { width: 287px; border: 2px solid #b3b3b3; background: #fff; color: #444; display: flex; align-items: center; padding-left: 9px; font-size: 14.5px; }
.search > svg { width: 18px; height: 18px; margin-right: 10px; }
.case { margin-left: auto; width: 77px; height: 36px; background: #f0f0f0; display: flex; align-items: center; justify-content: center; padding: 1px 2px; background-clip: padding-box; box-shadow: inset 0 0 0 2px #f0f0f0, inset 0 0 0 40px #e2e2e2; }
.case svg { width: 31px; height: 26px; }
.tview { width: 52px; display: flex; align-items: center; padding-left: 15px; }
.tview svg { width: 18px; height: 18px; }
.apps-row { display: flex; width: 736px; }
.apps-row i { width: 40.88px; display: flex; align-items: center; justify-content: center; position: relative; }
.apps-row svg { width: 24px; height: 24px; }
.apps-row svg.over { width: 32px; height: 26px; margin-left: 4px; }
.apps-row .run::after { content: ""; position: absolute; left: 4px; right: 4px; bottom: 0; height: 2px; background: #76b9ed; }
.apps-row .cur { background: linear-gradient(90deg, #526466 88%, #3e5053 88%); }
.apps-row .cur::after { left: 0; right: 0; }
text { font-family: "Open Sans", sans-serif; fill: #fff; text-anchor: middle; }
.ico-t { font-size: 16px; font-weight: 700; }
.ico-s { font-size: 9px; font-weight: 700; }
.ico-m { font-size: 10px; }
.ico-n { font-size: 12px; font-weight: 600; }
.weather { margin-left: 25px; width: 83px; display: flex; align-items: center; gap: 7px; font-size: 14px; }
.weather svg { width: 24px; height: 26px; }
.tray { display: flex; align-items: center; gap: 6.3px; width: 146px; }
.tray svg { width: 18px; height: 16px; }
.lang, .clock { display: flex; flex-direction: column; align-items: center; justify-content: center; font-size: 11.5px; line-height: 18px; }
.lang { width: 26px; }
.clock { width: 62px; margin-left: 11px; }
.notif { margin-left: 17px; display: flex; align-items: center; padding-top: 6px; }
.notif svg { width: 28px; height: 26px; }

/* tab hover card, nearly faded out */
.tabcard { position: absolute; left: 448px; top: 40px; width: 258px; height: 265px; background: #fff; opacity: .05; color: #000; font: 600 13.500px/20px "Open Sans", sans-serif; padding: 12px 13px; pointer-events: none; border-radius: 0 0 6px 6px; }
.tabcard p { display: block; width: max-content; }
.tabcard .host { font-weight: 400; font-size: 12.5px; line-height: 17px; }
.tabcard .mem { font-weight: 400; font-size: 12px; margin-left: 24px; }
.thumb { height: 146px; margin: 9px -13px 9px; background: #f1f1f1; padding-left: 64px; }
.thumb b { display: block; height: 12px; margin-left: -64px; background: #000; }
.thumb i { display: block; width: 110px; height: 82px; margin-top: 27px; background: repeating-linear-gradient(#1c50c8 0 5px, #5c83d9 5px 6px); }
```

FILE: script.js
```javascript
// Editor lines: [text, rendered width in px]
const lines = [
  ["1. If you're using it for hair, make sure your skin is dry! You only want", 545],
  ["it wet if you're using it on your feet to remove calluses. Do NOT use", 535],
  ["right before you get in the shower. The crystal hair eraser also has an", 546],
  ["exfoliation function. Therefore the hot water would seriously irritate", 535],
  ["your freshly exfoliated skin.", 215],
  ["2. Don't press too hard! It really doesn't take much pressure at all to", 538],
  ["do the job. If you press too hard you can get chaffing or burns. You", 532],
  ["will need several passes. Even if your skin looks hairless after one", 513],
  ["pass it may not feel as smooth as shaving with a razor but if you do", 534],
  ["it 1-2 more times it will get smooth.", 283],
  ["3. Moisturize after because, again, this exfoliates skin away too. (you", 539],
  ["no longer need to own body scrub and you'll have smooth, soft skin", 540],
  ["if you use it regularly.)", 175],
  ["4. Make sure you rinse it off in between. If you're using it and it stops", 547],
  ["working, it's likely full so you'll need to rinse it and make sure it's", 513],
  ["completely dry before using it again.", 291]
];
// Words the Portuguese spell checker accepts
const known = new Set(["a", "as", "do", "is", "no", "for", "me", "use", "hair", "com", "an"]);

const host = document.getElementById("lines");
for (const [text, width] of lines) {
  const row = document.createElement("div");
  row.className = "line";
  const span = document.createElement("span");
  span.dataset.w = width;
  text.split(/([A-Za-z']+)/).forEach((part, i) => {
    if (i % 2 && !known.has(part.toLowerCase())) {
      const u = document.createElement("u");
      u.textContent = part;
      span.append(u);
    } else {
      span.append(part);
    }
  });
  row.append(span);
  host.append(row);
}

// Tracks each label so it occupies its set width
for (const el of document.querySelectorAll("[data-w]")) {
  const range = document.createRange();
  range.selectNodeContents(el);
  const natural = range.getBoundingClientRect().width;
  const gap = (Number(el.dataset.w) - natural) / el.textContent.length;
  el.style.letterSpacing = gap.toFixed(3) + "px";
}
```
